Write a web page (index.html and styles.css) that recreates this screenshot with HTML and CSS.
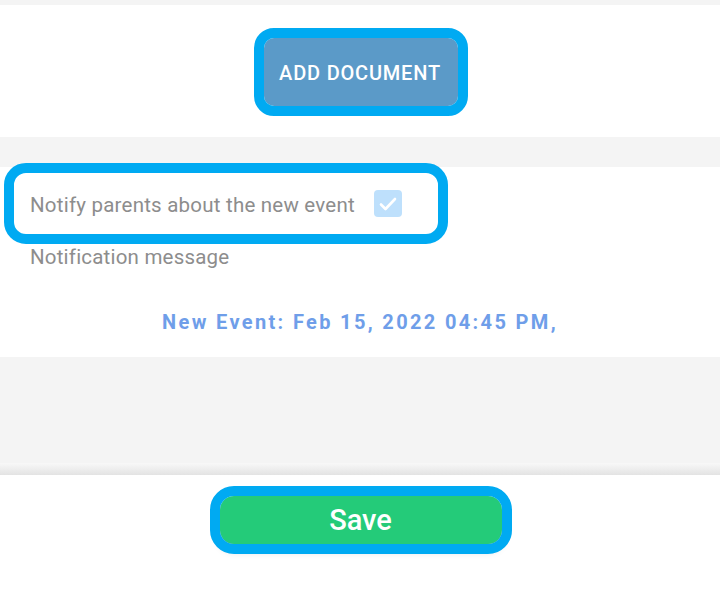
FILE: index.html
```html
<!DOCTYPE html>
<html>
<head>
<meta charset="utf-8">
<link rel="stylesheet" href="styles.css">
</head>
<body>
<div class="page">
  <div class="gap-top"></div>
  <section class="doc-section">
    <button class="btn-doc">ADD DOCUMENT</button>
  </section>
  <div class="gap-mid"></div>
  <section class="notify-section">
    <div class="notify-row">
      <span class="notify-label">Notify parents about the new event</span>
      <span class="checkbox">
        <svg width="18" height="14" viewBox="0 0 18 14"><path d="M2 7.5 L6.5 12 L16 2" fill="none" stroke="#fff" stroke-width="2.6" stroke-linecap="round" stroke-linejoin="round"/></svg>
      </span>
    </div>
    <div class="msg-label">Notification message</div>
    <div class="msg-text">New Event: Feb 15, 2022 04:45 PM,</div>
  </section>
  <div class="gap-bottom"></div>
  <div class="footer-shadow"></div>
  <footer class="footer">
    <button class="btn-save">Save</button>
  </footer>
</div>
</body>
</html>
```
FILE: styles.css
```css
html, body {
  margin: 0;
  padding: 0;
  background: #ffffff;
  font-family: Roboto, "Noto Sans", sans-serif;
}
.page {
  width: 720px;
  height: 592px;
  display: flex;
  flex-direction: column;
  overflow: hidden;
}
.gap-top {
  height: 5px;
  background: #f4f4f4;
}
.doc-section {
  height: 132px;
  background: #ffffff;
  display: flex;
  justify-content: center;
  align-items: flex-start;
  padding-top: 33px;
  box-sizing: border-box;
}
.btn-doc {
  width: 194px;
  height: 68px;
  margin-left: 2px;
  border: none;
  border-radius: 10px;
  background: #5b9ac8;
  color: #ffffff;
  font-family: Roboto, sans-serif;
  font-weight: 500;
  font-size: 20px;
  letter-spacing: 0.8px;
  line-height: 24px;
  outline: 10px solid #00aaf2;
  padding: 2px 2px 0 0;
}
.gap-mid {
  height: 30px;
  background: #f4f4f4;
}
.notify-section {
  height: 190px;
  background: #ffffff;
  padding-top: 6px;
  box-sizing: border-box;
}
.notify-row {
  width: 424px;
  height: 61px;
  margin-left: 14px;
  box-sizing: border-box;
  padding-left: 16px;
  padding-top: 2px;
  display: flex;
  align-items: center;
  border-radius: 12px;
  outline: 10px solid #00aaf2;
  background: #ffffff;
}
.notify-label {
  font-size: 20.5px;
  letter-spacing: 0.22px;
  color: #8d8d8d;
  line-height: 24px;
}
.checkbox {
  width: 28px;
  height: 27px;
  margin-left: 19px;
  margin-top: -2px;
  border-radius: 4px;
  background: #bee0fc;
  display: flex;
  align-items: center;
  justify-content: center;
}
.msg-label {
  margin-top: 11px;
  padding-left: 30px;
  font-size: 20.5px;
  letter-spacing: 0.2px;
  line-height: 24px;
  color: #8d8d8d;
}
.msg-text {
  margin-top: 41px;
  text-align: center;
  font-size: 20px;
  line-height: 24px;
  font-weight: 700;
  letter-spacing: 2.35px;
  color: #6f9ee9;
}
.gap-bottom {
  height: 106px;
  background: #f4f4f4;
}
.footer-shadow {
  height: 12px;
  background: linear-gradient(#f8f8f8, #e3e3e3);
}
.footer {
  flex: 1;
  background: #ffffff;
  display: flex;
  justify-content: center;
  align-items: flex-start;
  padding-top: 21px;
}
.btn-save {
  width: 282px;
  height: 48px;
  margin-left: 1px;
  border: none;
  border-radius: 14px;
  background: #24cb79;
  color: #ffffff;
  font-family: Roboto, sans-serif;
  font-weight: 500;
  font-size: 29px;
  outline: 10px solid #00aaf2;
  box-shadow: 0 6px 8px rgba(0,0,0,0.25);
  padding: 0;
}
```
